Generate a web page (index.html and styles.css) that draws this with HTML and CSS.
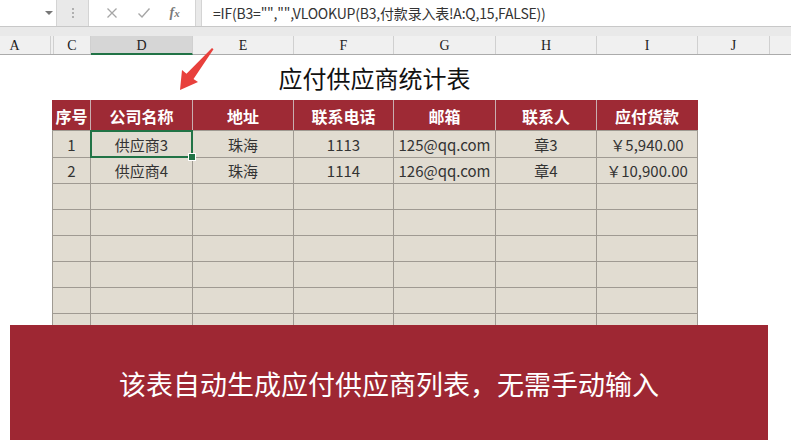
FILE: index.html
```html
<!DOCTYPE html>
<html lang="zh-CN">
<head>
<meta charset="utf-8">
<title>应付供应商统计表</title>
<link rel="stylesheet" href="styles.css">
</head>
<body>
<div class="app">
  <div class="fbar">
    <div class="namebox"><span class="dd"></span></div>
    <div class="grip"><i></i><i></i><i></i></div>
    <div class="btns">
      <svg class="ico" width="12" height="12" viewBox="0 0 12 12"><path d="M1.5 1.5 L10.5 10.5 M10.5 1.5 L1.5 10.5" stroke="#a6a6a6" stroke-width="1.3" fill="none"/></svg>
      <svg class="ico" width="14" height="12" viewBox="0 0 14 12"><path d="M1.5 6.5 L5 10 L12.5 1.5" stroke="#a6a6a6" stroke-width="1.4" fill="none"/></svg>
      <span class="fx">f<span class="fx-x">x</span></span>
    </div>
    <div class="formula">=IF(B3="","",VLOOKUP(B3,付款录入表!A:Q,15,FALSE))</div>
  </div>
  <div class="gapbar"></div>
  <div class="colhdr">
    <div class="ch w-a">A</div>
    <div class="ch w-b"></div>
    <div class="ch w-c">C</div>
    <div class="ch w-d sel">D</div>
    <div class="ch w-e">E</div>
    <div class="ch w-f">F</div>
    <div class="ch w-g">G</div>
    <div class="ch w-h">H</div>
    <div class="ch w-i">I</div>
    <div class="ch w-j">J</div>
    <div class="ch w-k"></div>
  </div>
  <div class="sheet">
    <div class="titlewrap"><div class="title">应付供应商统计表</div></div>
    <div class="tbl">
      <div class="thead">
        <div class="th">序号</div>
        <div class="th">公司名称</div>
        <div class="th">地址</div>
        <div class="th">联系电话</div>
        <div class="th">邮箱</div>
        <div class="th">联系人</div>
        <div class="th">应付货款</div>
      </div>
      <div class="tbody">
        <div class="td">1</div><div class="td active">供应商3</div><div class="td">珠海</div><div class="td">1113</div><div class="td">125@qq.com</div><div class="td">章3</div><div class="td">￥5,940.00</div>
        <div class="td">2</div><div class="td">供应商4</div><div class="td">珠海</div><div class="td">1114</div><div class="td">126@qq.com</div><div class="td">章4</div><div class="td">￥10,900.00</div>
        <div class="td"></div><div class="td"></div><div class="td"></div><div class="td"></div><div class="td"></div><div class="td"></div><div class="td"></div>
        <div class="td"></div><div class="td"></div><div class="td"></div><div class="td"></div><div class="td"></div><div class="td"></div><div class="td"></div>
        <div class="td"></div><div class="td"></div><div class="td"></div><div class="td"></div><div class="td"></div><div class="td"></div><div class="td"></div>
        <div class="td"></div><div class="td"></div><div class="td"></div><div class="td"></div><div class="td"></div><div class="td"></div><div class="td"></div>
        <div class="td"></div><div class="td"></div><div class="td"></div><div class="td"></div><div class="td"></div><div class="td"></div><div class="td"></div>
        <div class="td"></div><div class="td"></div><div class="td"></div><div class="td"></div><div class="td"></div><div class="td"></div><div class="td"></div>
        <div class="td"></div><div class="td"></div><div class="td"></div><div class="td"></div><div class="td"></div><div class="td"></div><div class="td"></div>
      </div>
    </div>
    <svg class="arrow" width="40" height="46" viewBox="0 0 40 46">
      <path d="M34 1 L35.5 2.2 L15.5 32 L20 35 L2 43 L4 23 L8.5 26.8 Z" fill="#e8403c"/>
    </svg>
    <div class="banner">该表自动生成应付供应商列表，无需手动输入</div>
  </div>
</div>
</body>
</html>
```

FILE: styles.css
```css
* { box-sizing: border-box; }
html, body { margin: 0; padding: 0; }
body {
  width: 791px;
  height: 441px;
  overflow: hidden;
  background: #ffffff;
  font-family: "Noto Sans CJK SC", "Noto Sans", sans-serif;
}
.app { width: 791px; height: 441px; display: flex; flex-direction: column; }

/* formula bar */
.fbar {
  height: 27px;
  display: flex;
  background: #e9e9e9;
  border-bottom: 1px solid #c8c8c8;
}
.namebox {
  width: 57px;
  background: #fff;
  border-right: 1px solid #d4d4d4;
  position: relative;
}
.dd {
  position: absolute;
  left: 45px;
  top: 11px;
  width: 0; height: 0;
  border-left: 4px solid transparent;
  border-right: 4px solid transparent;
  border-top: 4px solid #777;
}
.grip {
  width: 31px;
  display: flex;
  flex-direction: column;
  align-items: center;
  justify-content: center;
  gap: 2px;
}
.grip i { display: block; width: 2px; height: 2px; background: #b0b0b0; }
.btns {
  width: 108px;
  background: #fff;
  border-left: 1px solid #d4d4d4;
  border-right: 1px solid #d4d4d4;
  display: flex;
  align-items: center;
  justify-content: space-around;
  padding: 0 6px 0 8px;
}
.fx {
  font-family: "Liberation Serif", serif;
  font-style: italic;
  font-weight: bold;
  font-size: 14px;
  color: #7a7a7a;
}
.fx-x { font-size: 11px; }
.formula {
  flex: 1;
  margin-left: 5px;
  background: #fff;
  border-left: 1px solid #d4d4d4;
  padding-left: 11px;
  font-size: 14px;
  line-height: 26px;
  color: #333;
  white-space: nowrap;
  letter-spacing: -0.2px;
}
.gapbar { height: 9px; background: #e9e9e9; }

/* column headers */
.colhdr {
  height: 19px;
  display: flex;
  background: #f0f0f0;
  border-bottom: 1px solid #ababab;
}
.ch {
  height: 18px;
  border-right: 1px solid #d0d0d0;
  font-family: "Liberation Serif", "DejaVu Serif", serif;
  font-size: 14px;
  line-height: 19px;
  color: #222;
  text-align: center;
}
.w-a { width: 51px; padding-right: 21px; }
.w-b { width: 3px; }
.w-c { width: 37px; }
.w-d { width: 102px; }
.w-e { width: 101px; }
.w-f { width: 100px; }
.w-g { width: 102px; }
.w-h { width: 101px; }
.w-i { width: 101px; }
.w-j { width: 72px; }
.w-k { flex: 1; border-right: none; }
.sel {
  background: #d6d6d6;
  height: 19px;
  border-bottom: 2px solid #217346;
}

/* sheet */
.sheet { position: relative; flex: 1; }
.titlewrap {
  width: 697px;
  padding-left: 52px;
  height: 45px;
  display: flex;
  align-items: center;
  justify-content: center;
}
.title {
  font-size: 24px;
  color: #111;
}
.tbl { margin-left: 52px; width: 646px; }
.thead {
  display: grid;
  grid-template-columns: 37px 101px 100px 99px 101px 100px 100px;
  column-gap: 1px;
  background: #c9aeb0;
  border-left: 1px solid #9e2a35;
  border-right: 1px solid #9e2a35;
  height: 30px;
}
.th {
  background: #9e2a35;
  color: #fff;
  font-weight: bold;
  font-size: 16px;
  display: flex;
  align-items: center;
  justify-content: center;
  padding-top: 1px;
}
.tbody {
  display: grid;
  grid-template-columns: 37px 101px 100px 99px 101px 100px 100px;
  grid-template-rows: 26px;
  grid-auto-rows: 25px;
  gap: 1px;
  padding: 1px;
  background: #9f9a92;
}
.td {
  background: #e1dcd1;
  font-size: 15px;
  color: #333;
  display: flex;
  align-items: center;
  justify-content: center;
}
.active { position: relative; }
.active::after {
  content: "";
  position: absolute;
  left: -1px; top: -1px; right: -1px; bottom: -1px;
  border: 2px solid #217346;
}
.active::before {
  content: "";
  position: absolute;
  right: -4px;
  bottom: -4px;
  width: 6px;
  height: 6px;
  background: #217346;
  border: 1px solid #fff;
  z-index: 1;
}

.arrow { position: absolute; left: 178px; top: -8px; }

.banner {
  position: absolute;
  left: 10px;
  top: 270px;
  width: 758px;
  height: 115px;
  background: #9e2733;
  color: #fff;
  font-size: 27px;
  display: flex;
  align-items: center;
  justify-content: center;
  padding-top: 2px;
}
```
